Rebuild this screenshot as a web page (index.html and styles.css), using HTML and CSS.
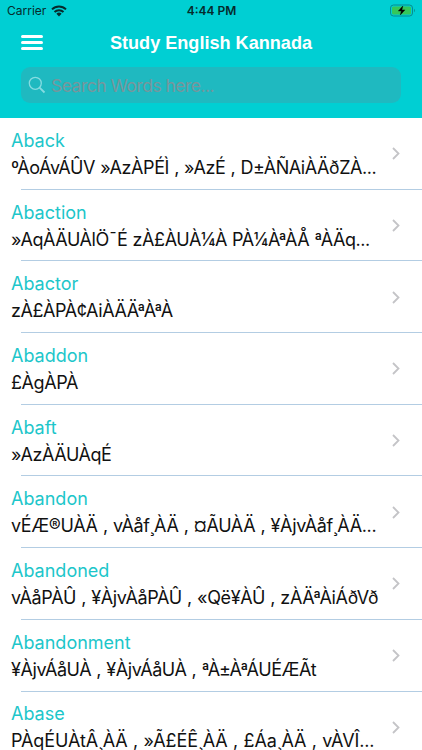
FILE: index.html
```html
<!DOCTYPE html>
<html lang="en">
<head>
    <meta charset="UTF-8">
    <meta name="viewport" content="width=device-width, initial-scale=1">
    <title>Study English Kannada</title>
    <link rel="stylesheet" href="styles.css">
</head>
<body>
    <header class="header">
        <div class="status-bar">
            <div class="carrier">
                <span>Carrier</span>
                <svg class="wifi" viewBox="0 0 16 12" width="16" height="12">
                    <path d="M1 4.4a10 10 0 0 1 14 0M3.5 7a6.4 6.4 0 0 1 9 0" fill="none" stroke="#062b2c" stroke-width="2"/>
                    <path d="M8 11.4L5.4 8.8a3.7 3.7 0 0 1 5.2 0z" fill="#062b2c"/>
                </svg>
            </div>
            <span class="time">4:44 PM</span>
            <svg class="battery" viewBox="0 0 26 13" width="26" height="13">
                <rect x=".5" y="1" width="22" height="11" rx="3" fill="none" stroke="#078c8f"/>
                <rect x="2" y="2.5" width="19" height="8" rx="1.6" fill="#35c759"/>
                <path d="M24 4.8v3.4c1.2-.5 1.2-2.9 0-3.4z" fill="#078c8f"/>
                <path d="M12.8 2L8.3 7h3l-1 4 4.6-5.1h-3z" fill="#000" stroke="#000" stroke-width=".4"/>
            </svg>
        </div>
        <div class="nav-bar">
            <button class="menu-button" aria-label="Menu">
                <span></span>
                <span></span>
                <span></span>
            </button>
            <h1>Study English Kannada</h1>
        </div>
        <div class="search">
            <svg viewBox="0 0 18 18" width="18" height="18" fill="none" stroke="#86dce1" stroke-width="1.3">
                <circle cx="7.3" cy="7.3" r="6"/>
                <path d="M11.6 11.6L16.5 16.5" stroke-width="1.8"/>
            </svg>
            <span>Search Words here...</span>
        </div>
    </header>
    <main class="word-list">
        <div class="word">
            <div class="word-text">
                <h2>Aback</h2>
                <p>ºÀoÁvÁÛV »AzÀPÉÌ , »AzÉ , D±ÀÑAiÀÄðZÀ...</p>
            </div>
            <svg class="chevron" viewBox="0 0 8 13" width="8" height="13"><path d="M1 1l5.5 5.5L1 12"/></svg>
        </div>
        <div class="word">
            <div class="word-text">
                <h2>Abaction</h2>
                <p>»AqÀÄUÀlÖ¯É zÀ£ÀUÀ¼À PÀ¼ÀªÀÅ ªÀÄq...</p>
            </div>
            <svg class="chevron" viewBox="0 0 8 13" width="8" height="13"><path d="M1 1l5.5 5.5L1 12"/></svg>
        </div>
        <div class="word">
            <div class="word-text">
                <h2>Abactor</h2>
                <p>zÀ£ÀPÀ¢AiÀÄÄªÀªÀ</p>
            </div>
            <svg class="chevron" viewBox="0 0 8 13" width="8" height="13"><path d="M1 1l5.5 5.5L1 12"/></svg>
        </div>
        <div class="word">
            <div class="word-text">
                <h2>Abaddon</h2>
                <p>£ÀgÀPÀ</p>
            </div>
            <svg class="chevron" viewBox="0 0 8 13" width="8" height="13"><path d="M1 1l5.5 5.5L1 12"/></svg>
        </div>
        <div class="word">
            <div class="word-text">
                <h2>Abaft</h2>
                <p>»AzÀÄUÀqÉ</p>
            </div>
            <svg class="chevron" viewBox="0 0 8 13" width="8" height="13"><path d="M1 1l5.5 5.5L1 12"/></svg>
        </div>
        <div class="word">
            <div class="word-text">
                <h2>Abandon</h2>
                <p class="medium">vÉÆ®UÀÄ , vÀåf¸ÀÄ , ¤ÃUÀÄ , ¥ÀjvÀåf¸ÀÄ...</p>
            </div>
            <svg class="chevron" viewBox="0 0 8 13" width="8" height="13"><path d="M1 1l5.5 5.5L1 12"/></svg>
        </div>
        <div class="word">
            <div class="word-text">
                <h2>Abandoned</h2>
                <p class="medium">vÀåPÀÛ , ¥ÀjvÀåPÀÛ , «Që¥ÀÛ , zÀÄªÀiÁðVð</p>
            </div>
            <svg class="chevron" viewBox="0 0 8 13" width="8" height="13"><path d="M1 1l5.5 5.5L1 12"/></svg>
        </div>
        <div class="word">
            <div class="word-text">
                <h2>Abandonment</h2>
                <p>¥ÀjvÁåUÀ , ¥ÀjvÁåUÀ , ªÀ±ÀªÁUÉÆÃt</p>
            </div>
            <svg class="chevron" viewBox="0 0 8 13" width="8" height="13"><path d="M1 1l5.5 5.5L1 12"/></svg>
        </div>
        <div class="word">
            <div class="word-text">
                <h2>Abase</h2>
                <p class="wide">PÀqÉUÀtÂ¸ÀÄ , »Ã£ÉÊ¸ÀÄ , £Áa¸ÀÄ , vÀVÎ...</p>
            </div>
            <svg class="chevron" viewBox="0 0 8 13" width="8" height="13"><path d="M1 1l5.5 5.5L1 12"/></svg>
        </div>
    </main>
</body>
</html>
```
FILE: styles.css
```css
* {
    box-sizing: border-box;
}

body {
    font-family: Inter, "Liberation Sans", sans-serif;
    margin: 0;
    height: 750px;
    overflow: hidden;
    background: #fff;
}

.header {
    height: 118px;
    background: #00cfd3;
}

.status-bar {
    display: grid;
    grid-template-columns: 1fr auto 1fr;
    align-items: center;
    height: 21px;
    padding: 0 6px 0 7px;
    font-size: 12px;
    color: #062b2c;
}

.carrier {
    display: flex;
    align-items: center;
    gap: 5px;
}

.time {
    font-weight: 600;
}

.battery {
    justify-self: end;
}

.nav-bar {
    display: grid;
    grid-template-columns: 22px 1fr 22px;
    align-items: center;
    height: 43px;
    padding: 0 21px;
}

.menu-button {
    display: flex;
    flex-direction: column;
    gap: 3px;
    padding: 0;
    border: none;
    background: none;
}

.menu-button span {
    width: 22px;
    height: 3px;
    border-radius: 1.5px;
    background: #fff;
}

h1 {
    margin: 2px 0 0;
    text-align: center;
    font-family: "Liberation Sans", sans-serif;
    font-size: 18.1px;
    font-weight: 700;
    color: #fff;
}

.search {
    display: flex;
    align-items: center;
    gap: 5px;
    height: 36px;
    margin: 3px 21px 0 21px;
    padding: 0 7px;
    border-radius: 9px;
    background: #1fb9c0;
    font-size: 17.6px;
    letter-spacing: -0.55px;
    color: #77969c;
}

.word {
    display: flex;
    align-items: center;
    justify-content: space-between;
    height: 71.7px;
    padding: 0 22px 0 11px;
    background: linear-gradient(#b3cde3, #b3cde3) 21px 100% / 100% 1px no-repeat;
}

.word-text {
    width: 369px;
    margin-top: 1px;
    white-space: nowrap;
}

.word h2 {
    margin: 0;
    font-size: 18px;
    font-weight: 400;
    line-height: 24px;
    color: #1cc6ca;
}

.word p {
    margin: 3px 0 0;
    font-size: 18px;
    line-height: 24px;
    letter-spacing: -0.42px;
    word-spacing: 0.5px;
    color: #111;
}

.word p.medium {
    letter-spacing: -0.35px;
}

.word p.wide {
    letter-spacing: -0.11px;
}

.chevron {
    flex: none;
    fill: none;
    stroke: #c4c4c7;
    stroke-width: 1.8;
}
```
